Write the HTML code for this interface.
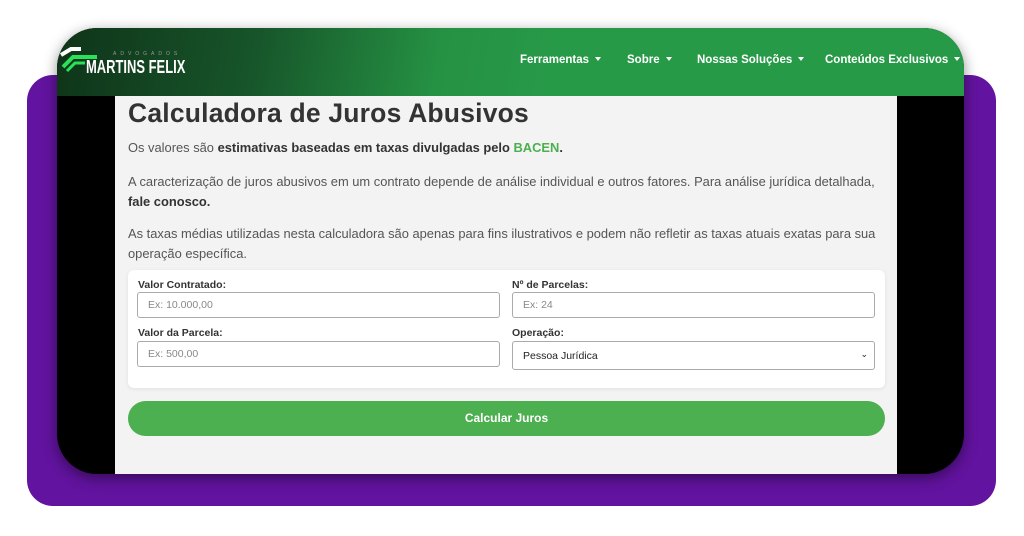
<!DOCTYPE html>
<html><head><meta charset="utf-8"><style>
*{margin:0;padding:0;box-sizing:border-box}
body{width:1024px;height:536px;background:#fff;position:relative;overflow:hidden;font-family:"Liberation Sans",sans-serif}
.purple{position:absolute;left:27px;top:75px;width:969px;height:431px;background:#62139f;border-radius:26px}
.dev{position:absolute;left:57px;top:28px;width:907px;height:446px;background:#000;border-radius:40px;overflow:hidden;box-shadow:0 4px 14px rgba(0,0,0,.45)}
.hdr{position:absolute;left:0;top:0;width:907px;height:68px;background:linear-gradient(100deg,#0f3419 0%,#17552a 22%,#259143 42%,#279a48 55%,#279a48 100%)}
.content{position:absolute;left:58px;top:68px;width:782px;height:378px;background:#f3f3f3}
.t{position:absolute;white-space:nowrap}
.nav{color:#fff;font-weight:bold;font-size:11.5px;top:26px}
.nav:after{content:"";display:inline-block;margin-left:6px;border-left:3.5px solid transparent;border-right:3.5px solid transparent;border-top:4px solid #fff;vertical-align:2px}
p{position:absolute;font-size:12.9px;color:#555;line-height:20px;white-space:nowrap}
b{color:#333}
.card{position:absolute;left:71px;top:242px;width:757px;height:118px;background:#fff;border-radius:6px;box-shadow:0 1px 4px rgba(0,0,0,.08)}
.lab{position:absolute;font-size:10.5px;font-weight:bold;color:#333}
.inp{position:absolute;width:363px;height:26px;border:1px solid #aaa;border-radius:3px;background:#fff;font-size:10.5px;color:#888;padding:6px 10px}
.btn{position:absolute;left:71px;top:333px;width:757px;height:35px;border-radius:18px;background:#4caf50;color:#fff;font-weight:bold;font-size:12px;text-align:center;line-height:35px}
</style></head><body>
<div class="purple"></div>
<div class="dev">
 <div class="hdr">
  <svg style="position:absolute;left:2px;top:17px" width="40" height="30" viewBox="0 0 40 30"><path d="M2 10 L12 4 L22 4" stroke="#fff" stroke-width="4" fill="none"/><path d="M4 22 L14 12 L38 12" stroke="#2de05a" stroke-width="4" fill="none"/><path d="M8 26 L16 18 L26 18" stroke="#2de05a" stroke-width="3" fill="none"/></svg>
  <div class="t" style="left:56px;top:23px;font-size:5px;color:#999;letter-spacing:4px">ADVOGADOS</div>
  <div class="t" style="left:29px;top:29px;color:#fff;font-weight:bold;font-size:18px;transform:scaleX(.72);transform-origin:left">MARTINS FELIX</div>
  <div class="t nav" style="left:463px">Ferramentas</div>
  <div class="t nav" style="left:570px">Sobre</div>
  <div class="t nav" style="left:640px">Nossas Soluções</div>
  <div class="t nav" style="left:768px">Conteúdos Exclusivos</div>
 </div>
 <div class="content">
  <div class="t" style="left:13px;top:2px;font-size:26.5px;font-weight:bold;color:#333;letter-spacing:.2px">Calculadora de Juros Abusivos</div>
  <p style="left:13px;top:42px">Os valores são <b>estimativas baseadas em taxas divulgadas pelo <span style="color:#4caf50">BACEN</span>.</b></p>
  <p style="left:13px;top:76px">A caracterização de juros abusivos em um contrato depende de análise individual e outros fatores. Para análise jurídica detalhada,<br><b>fale conosco.</b></p>
  <p style="left:13px;top:128px">As taxas médias utilizadas nesta calculadora são apenas para fins ilustrativos e podem não refletir as taxas atuais exatas para sua<br>operação específica.</p>
 </div>
</div>
<div style="position:absolute;left:57px;top:28px;width:907px;height:446px">
 <div class="card">
  <div class="lab" style="left:10px;top:9px">Valor Contratado:</div>
  <div class="inp" style="left:9px;top:22px">Ex: 10.000,00</div>
  <div class="lab" style="left:10px;top:57px">Valor da Parcela:</div>
  <div class="inp" style="left:9px;top:71px">Ex: 500,00</div>
  <div class="lab" style="left:384px;top:9px">Nº de Parcelas:</div>
  <div class="inp" style="left:384px;top:22px">Ex: 24</div>
  <div class="lab" style="left:384px;top:57px">Operação:</div>
  <div class="inp" style="left:384px;top:71px;height:29px;color:#222;padding-top:8px">Pessoa Jurídica<span style="position:absolute;right:6px;top:7px;font-size:9px">&#8964;</span></div>
 </div>
 <div class="btn" style="left:71px;top:373px">Calcular Juros</div>
</div>
</body></html>
